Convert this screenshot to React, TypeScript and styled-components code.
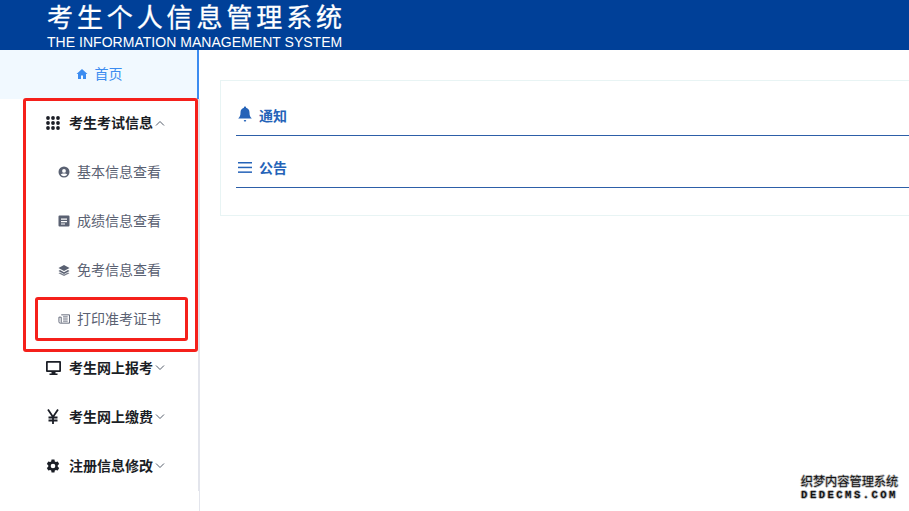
import React from "react";
import styled, { createGlobalStyle } from "styled-components";

const Global = createGlobalStyle`
  html, body { margin: 0; padding: 0; background: #fff; }
  body { font-family: "Liberation Sans", "Noto Sans CJK SC", sans-serif; overflow: hidden; }
`;

const Home = () => (
  <svg width="12" height="12" viewBox="0 0 24 24" fill="currentColor"><path d="M12 2 1 12h3v10h6v-7h4v7h6V12h3z" /></svg>
);
const Grid = () => (
  <svg width="14" height="14" viewBox="0 0 14 14" fill="currentColor">
    {[2, 7, 12].flatMap((y) =>
      [2, 7, 12].map((x) => <circle key={`${x}-${y}`} cx={x} cy={y} r="1.900" />)
    )}
  </svg>
);
const User = () => (
  <svg width="12" height="12" viewBox="0 0 24 24" fill="currentColor">
    <path fillRule="evenodd" d="M12 1a11 11 0 1 0 0 22 11 11 0 0 0 0-22zm0 5a3.800 3.800 0 1 1 0 7.600A3.800 3.800 0 0 1 12 6zm0 14.600a8.800 8.800 0 0 1-6.600-3c.9-1.700 3.600-2.600 6.600-2.600s5.700.9 6.600 2.600a8.800 8.800 0 0 1-6.600 3z" />
  </svg>
);
const Note = () => (
  <svg width="12" height="12" viewBox="0 0 24 24" fill="currentColor">
    <path fillRule="evenodd" d="M3 1h18a2 2 0 0 1 2 2v18a2 2 0 0 1-2 2H3a2 2 0 0 1-2-2V3a2 2 0 0 1 2-2zm3 6v2.500h12V7zm0 5v2.500h12V12zm0 5v2.200h8V17z" />
  </svg>
);
const Layers = () => (
  <svg width="12" height="12" viewBox="0 0 24 24" fill="currentColor">
    <path d="M12 2 1 8l11 6 11-6z" />
    <path d="m4 12.200-3 1.800 11 6 11-6-3-1.800-8 4.400z" />
    <path d="m4 17-3 1.500L12 24l11-5.500L20 17l-8 4z" opacity="0.8" />
  </svg>
);
const Paper = () => (
  <svg width="13" height="12" viewBox="0 0 13 12" fill="none" stroke="currentColor" strokeWidth="1">
    <path d="M3.500 1.500h9v9h-10a1.500 1.500 0 0 1-1.500-1.500V4h2.500v6" />
    <path d="M5.500 3.700h5M5.500 6h5M5.500 8.300h5" />
  </svg>
);
const Monitor = () => (
  <svg width="15" height="14" viewBox="0 0 30 28" fill="currentColor">
    <path fillRule="evenodd" d="M2 0h26a2 2 0 0 1 2 2v18a2 2 0 0 1-2 2H19v3h4v3H7v-3h4v-3H2a2 2 0 0 1-2-2V2a2 2 0 0 1 2-2zm1.500 3.500v15h23v-15z" />
  </svg>
);
const Yen = () => (
  <svg width="14" height="15" viewBox="0 0 14 15" fill="none" stroke="currentColor" strokeWidth="1.800">
    <path d="M2 .5 7 8l5-7.500M7 8v7M2.500 8.500h9M2.500 11.500h9" />
  </svg>
);
const Gear = () => (
  <svg width="14" height="14" viewBox="0 0 24 24" fill="currentColor">
    <path fillRule="evenodd" d="M14.500 1h-5l-.6 3.200a8.500 8.500 0 0 0-1.900 1.100L3.900 4.200 1.400 8.500l2.500 2.100a8.500 8.500 0 0 0 0 2.800l-2.500 2.100 2.500 4.300 3.100-1.100c.6.500 1.200.8 1.900 1.100L9.500 23h5l.6-3.200c.7-.3 1.300-.6 1.900-1.100l3.100 1.100 2.500-4.300-2.500-2.100a8.500 8.500 0 0 0 0-2.800l2.500-2.100-2.500-4.300-3.100 1.100a8.500 8.500 0 0 0-1.900-1.100zM12 8a4 4 0 1 1 0 8 4 4 0 0 1 0-8z" />
  </svg>
);
const Chevron = ({ up }: { up?: boolean }) => (
  <svg width="10" height="6" viewBox="0 0 10 6" fill="none" stroke="#555c6b" strokeWidth="1">
    <path d={up ? "M1 5.500 5 1.500l4 4" : "M1 .5l4 4 4-4"} />
  </svg>
);
const Bell = () => (
  <svg width="14" height="16" viewBox="0 0 14 16" fill="currentColor">
    <path d="M7 0c.7 0 1.100.5 1.100 1.200C10.300 1.800 11.500 3.600 11.500 6c0 3 .6 4.500 2.300 6H.2C1.900 10.500 2.500 9 2.500 6c0-2.400 1.200-4.200 3.400-4.800C5.900.5 6.300 0 7 0z" transform="translate(0 .5)" />
    <rect x="5.800" y="14" width="2.400" height="1.600" rx="0.8" />
  </svg>
);
const Bars = () => (
  <svg width="14" height="11" viewBox="0 0 14 11" fill="currentColor">
    <rect width="14" height="1.500" y="0" />
    <rect width="14" height="1.500" y="4.700" />
    <rect width="14" height="1.500" y="9.400" />
  </svg>
);

const Page = styled.div`
  width: 909px;
  height: 511px;
  position: relative;
  overflow: hidden;
  display: flex;
  flex-direction: column;
`;
const Header = styled.header`
  height: 50px;
  background: #004098;
  color: #fff;
  padding-left: 47px;
  box-sizing: border-box;
  flex: none;
`;
const Title = styled.div`
  font-size: 26px;
  line-height: 36px;
  letter-spacing: 3.900px;
  white-space: nowrap;
  -webkit-text-stroke: 0.3px #fff;
  margin-bottom: -2px;
`;
const SubTitle = styled.div`
  font-size: 14px;
  line-height: 16px;
  letter-spacing: 0.030px;
  white-space: nowrap;
`;
const Body = styled.div`
  flex: 1;
  display: flex;
  min-height: 0;
`;
const Side = styled.nav`
  width: 200px;
  flex: none;
  box-sizing: border-box;
  border-right: 1px solid #e3e5ec;
  position: relative;
`;
const Menu = styled.div`
  width: 199px;
  height: 441px;
  box-sizing: border-box;
  border-right: 1px solid #e3e5ec;
`;
const Item = styled.div<{ $active?: boolean; $sub?: boolean; $top?: boolean }>`
  height: 49px;
  box-sizing: border-box;
  display: flex;
  align-items: center;
  justify-content: ${(p) => (p.$active ? "center" : "flex-start")};
  gap: 7px;
  padding-bottom: 2px;
  padding-left: ${(p) => (p.$active ? "1px" : p.$sub ? "58px" : "46px")};
  font-size: 14px;
  color: ${(p) => (p.$active ? "#3c8cf0" : p.$sub ? "#5a6172" : "#1b1e26")};
  font-weight: ${(p) => (p.$top ? 600 : 400)};
  background: ${(p) => (p.$active ? "#f1f9ff" : "transparent")};
  ${(p) => p.$active && "width: 199px; border-right: 2px solid #3c8cf0; box-shadow: 1px 0 0 #fff;"}
`;
const IconSlot = styled.span<{ $wide?: boolean }>`
  width: ${(p) => (p.$wide ? "16px" : "12px")};
  height: 16px;
  flex: none;
  display: flex;
  align-items: center;
  justify-content: flex-start;
`;
const Label = styled.span`
  white-space: nowrap;
  margin-bottom: 2px;
`;
const Caret = styled.span`
  display: flex;
  margin-left: -5px;
`;
const RedBox = styled.div`
  position: absolute;
  box-sizing: border-box;
  border: 3px solid #f5201b;
  border-radius: 3px;
  pointer-events: none;
`;
const OuterBox = styled(RedBox)`
  left: 23px;
  top: 48px;
  width: 175px;
  height: 254px;
`;
const InnerBox = styled(RedBox)`
  left: 35px;
  top: 247px;
  width: 153px;
  height: 44px;
`;
const Main = styled.main`
  flex: 1;
  padding: 30px 0 0 20px;
  min-width: 0;
`;
const Card = styled.section`
  height: 136px;
  box-sizing: border-box;
  border: 1px solid #e8f4f4;
  border-right: none;
  padding: 10px 0 0 15px;
`;
const Notice = styled.div`
  height: 40px;
  padding: 4px 0 0 2px;
  margin-bottom: 7px;
  border-bottom: 1px solid #2d5fa8;
  display: flex;
  align-items: center;
  gap: 8px;
  color: #2563b8;
  font-size: 14px;
  font-weight: 600;
`;
const BellSlot = styled.span`
  display: flex;
  margin-bottom: 2px;
`;
const NoticeLabel = styled.span`
  margin-left: -1px;
`;
const Mark = styled.div`
  position: absolute;
  left: 800px;
  top: 475px;
  width: 99px;
  text-align: center;
  color: #111;
  text-shadow: 1px 0 0 #bbb, -1px 0 0 #bbb, 0 1px 0 #bbb, 0 -1px 0 #bbb;
`;
const MarkTop = styled.div`
  font-size: 12.200px;
  line-height: 14px;
  white-space: nowrap;
`;
const MarkBottom = styled.div`
  font-size: 10.500px;
  line-height: 13px;
  font-family: "Liberation Mono", monospace;
  font-weight: 700;
  letter-spacing: 2.500px;
  white-space: nowrap;
`;

export default function App() {
  return (
    <Page>
      <Global />
      <Header>
        <Title>考生个人信息管理系统</Title>
        <SubTitle>THE INFORMATION MANAGEMENT SYSTEM</SubTitle>
      </Header>
      <Body>
        <Side>
          <Menu>
            <Item $active><IconSlot><Home /></IconSlot><Label>首页</Label></Item>
            <Item $top><IconSlot $wide><Grid /></IconSlot><Label>考生考试信息</Label><Caret><Chevron up /></Caret></Item>
            <Item $sub><IconSlot><User /></IconSlot><Label>基本信息查看</Label></Item>
            <Item $sub><IconSlot><Note /></IconSlot><Label>成绩信息查看</Label></Item>
            <Item $sub><IconSlot><Layers /></IconSlot><Label>免考信息查看</Label></Item>
            <Item $sub><IconSlot><Paper /></IconSlot><Label>打印准考证书</Label></Item>
            <Item $top><IconSlot $wide><Monitor /></IconSlot><Label>考生网上报考</Label><Caret><Chevron /></Caret></Item>
            <Item $top><IconSlot $wide><Yen /></IconSlot><Label>考生网上缴费</Label><Caret><Chevron /></Caret></Item>
            <Item $top><IconSlot $wide><Gear /></IconSlot><Label>注册信息修改</Label><Caret><Chevron /></Caret></Item>
          </Menu>
          <OuterBox />
          <InnerBox />
        </Side>
        <Main>
          <Card>
            <Notice><BellSlot><Bell /></BellSlot><NoticeLabel>通知</NoticeLabel></Notice>
            <Notice><Bars /><NoticeLabel>公告</NoticeLabel></Notice>
          </Card>
        </Main>
      </Body>
      <Mark>
        <MarkTop>织梦内容管理系统</MarkTop>
        <MarkBottom>DEDECMS.COM</MarkBottom>
      </Mark>
    </Page>
  );
}
